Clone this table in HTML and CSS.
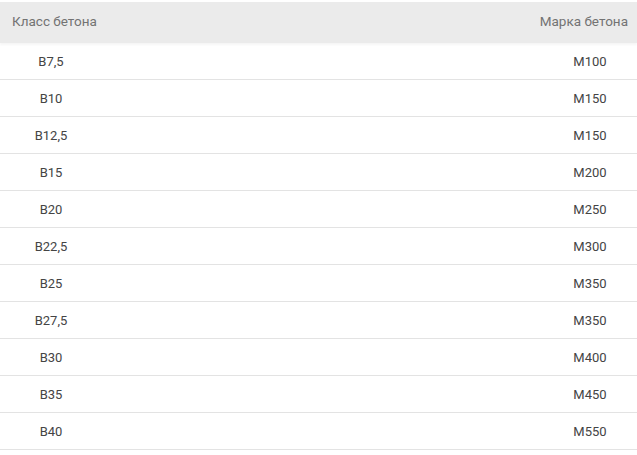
FILE: index.html
```html
<!DOCTYPE html>
<html lang="ru">
<head>
<meta charset="utf-8">
<link rel="stylesheet" href="styles.css">
</head>
<body>
<div class="table">
  <div class="head">
    <span class="h-left">Класс бетона</span>
    <span class="h-right">Марка бетона</span>
  </div>
  <div class="row"><span class="c-left">B7,5</span><span class="c-right">M100</span></div>
  <div class="row"><span class="c-left">B10</span><span class="c-right">M150</span></div>
  <div class="row"><span class="c-left">B12,5</span><span class="c-right">M150</span></div>
  <div class="row"><span class="c-left">B15</span><span class="c-right">M200</span></div>
  <div class="row"><span class="c-left">B20</span><span class="c-right">M250</span></div>
  <div class="row"><span class="c-left">B22,5</span><span class="c-right">M300</span></div>
  <div class="row"><span class="c-left">B25</span><span class="c-right">M350</span></div>
  <div class="row"><span class="c-left">B27,5</span><span class="c-right">M350</span></div>
  <div class="row"><span class="c-left">B30</span><span class="c-right">M400</span></div>
  <div class="row"><span class="c-left">B35</span><span class="c-right">M450</span></div>
  <div class="row"><span class="c-left">B40</span><span class="c-right">M550</span></div>
</div>
</body>
</html>
```
FILE: styles.css
```css
html, body {
  margin: 0;
  padding: 0;
  background: #fff;
}
body {
  font-family: Roboto, "Liberation Sans", Arial, sans-serif;
  padding-top: 2px;
}
.table {
  display: flex;
  flex-direction: column;
}
.head {
  display: flex;
  justify-content: space-between;
  align-items: center;
  height: 41px;
  box-sizing: border-box;
  background: #ebebeb;
  padding: 0 9px 3px 12px;
  font-size: 13.5px;
  color: #737373;
  box-shadow: 0 2px 2px rgba(0,0,0,0.04);
}
.row {
  display: flex;
  justify-content: space-between;
  align-items: center;
  height: 36px;
  border-bottom: 1px solid #e3e3e3;
  font-size: 13px;
  color: #444;
}
.c-left {
  width: 102px;
  text-align: center;
}
.c-right {
  width: 94px;
  text-align: center;
}
```
